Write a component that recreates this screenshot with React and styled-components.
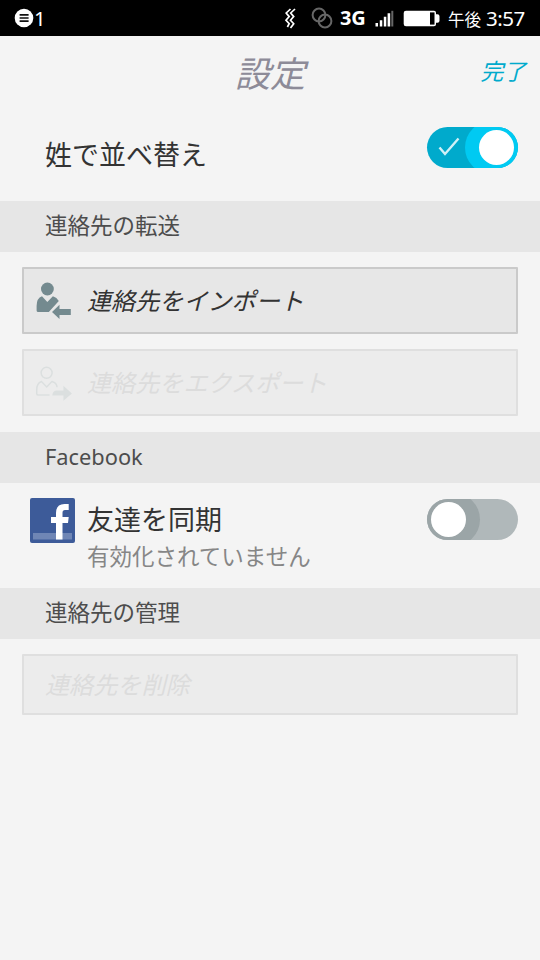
import React from "react";
import styled, { createGlobalStyle } from "styled-components";

const GlobalStyle = createGlobalStyle`
  * { box-sizing: border-box; }
  body {
    margin: 0;
    background: #f4f4f4;
    font-family: "Open Sans", "Noto Sans CJK JP", sans-serif;
  }
`;

const Screen = styled.main`
  width: 540px;
  height: 960px;
  display: flex;
  flex-direction: column;
  overflow: hidden;
  background: #f4f4f4;
`;

const StatusBar = styled.div`
  height: 36px;
  flex: none;
  display: flex;
  align-items: center;
  padding: 0 14px;
  background: #000;
  color: #fff;
  font-size: 20px;
  line-height: 36px;
  white-space: nowrap;
  svg { display: block; flex: none; }
`;

const Notifications = styled.span`
  width: 270px;
  display: flex;
  align-items: center;
  font-family: "Noto Sans", sans-serif;
  font-size: 20.5px;
  letter-spacing: -0.7px;
`;

const Spacer = styled.span`
  width: ${(p) => p.$width}px;
  flex: none;
`;

const Network = styled.span`
  width: 27px;
  margin: 0 8px 0 7px;
  font-family: "Noto Sans", sans-serif;
  font-size: 20px;
  font-weight: 700;
  letter-spacing: -0.2px;
`;

const Meridiem = styled.span`
  width: 33px;
  margin: 0 5px 0 7px;
  font-family: "Noto Sans CJK JP", sans-serif;
  font-size: 16.5px;
  padding-top: 1px;
`;

const Clock = styled.span`
  font-family: "Noto Sans", sans-serif;
  font-size: 20.5px;
  letter-spacing: -0.5px;
`;

const Header = styled.header`
  height: 75px;
  flex: none;
  display: grid;
  grid-template-columns: 1fr auto 1fr;
  padding-right: 14px;
`;

const Title = styled.h1`
  grid-column: 2;
  margin: 0 0 0 14px;
  font-size: 35.3px;
  font-weight: 400;
  font-style: italic;
  line-height: 74px;
  color: #8d8b98;
`;

const DoneButton = styled.button`
  justify-self: end;
  align-self: start;
  margin-top: 20px;
  border: 0;
  padding: 0;
  background: none;
  font: italic 400 22.8px/30px "Noto Sans CJK JP", sans-serif;
  color: #00aacc;
`;

const SettingRow = styled.div`
  height: ${(p) => p.$height}px;
  flex: none;
  display: flex;
  justify-content: space-between;
  align-items: flex-start;
  padding: ${(p) => p.$top}px 22px 0 ${(p) => p.$left}px;
`;

const SettingText = styled.div`
  flex: 1;
  padding-top: ${(p) => p.$top}px;
`;

const SettingName = styled.div`
  font-size: 27px;
  line-height: 40px;
  color: #333;
`;

const SettingStatus = styled.div`
  font-size: 22.5px;
  line-height: 34px;
  color: #868686;
`;

const SectionTitle = styled.h2`
  height: 51px;
  flex: none;
  margin: 0;
  padding-left: 45px;
  background: #e6e6e6;
  font-size: 22.5px;
  font-weight: 400;
  line-height: 50px;
  color: #4d4d4d;
`;

const LatinTitle = styled.span`
  font-family: "Noto Sans", sans-serif;
  font-size: 21.8px;
`;

const ActionGroup = styled.div`
  flex: none;
  display: flex;
  flex-direction: column;
  gap: 15px;
  padding: 15px 22px 16px;
`;

const ActionButton = styled.button`
  height: ${(p) => p.$height || 67}px;
  display: flex;
  align-items: center;
  padding: 0 0 2px ${(p) => (p.$icon ? 11 : 21)}px;
  border: 2px solid #cacaca;
  border-radius: 1px;
  background: #e7e7e7;
  font: italic 400 24.1px/36px "Noto Sans CJK JP", sans-serif;
  color: #333;
  text-align: left;
  svg { flex: none; margin-right: 14px; }
  &:disabled {
    border-color: #dfdfdf;
    background: #ececec;
    color: #dcdcdc;
  }
`;

const Track = styled.span`
  width: 91px;
  height: 41px;
  flex: none;
  display: flex;
  justify-content: ${(p) => (p.$on ? "flex-end" : "flex-start")};
  margin-top: ${(p) => (p.$on ? 0 : 1)}px;
  overflow: hidden;
  border-radius: 21px;
  background: ${(p) => (p.$on ? "#00aacc" : "#b0b8ba")};
`;

const TrackMark = styled.span`
  width: 38px;
  flex: none;
  padding: 10px 0 0 11px;
`;

const Halo = styled.span`
  width: 53px;
  height: 53px;
  flex: none;
  display: flex;
  align-items: center;
  justify-content: ${(p) => (p.$on ? "flex-end" : "flex-start")};
  margin-top: -6px;
  padding: 0 4px;
  border-radius: ${(p) => (p.$on ? "27px 0 0 27px" : "0 27px 27px 0")};
  background: ${(p) => (p.$on ? "#00caf2" : "#9ba5a7")};
`;

const Knob = styled.span`
  width: 35px;
  height: 35px;
  border-radius: 50%;
  background: #fff;
`;

function Toggle({ on }) {
  return (
    <Track $on={on} role="switch" aria-checked={on}>
      {on && (
        <TrackMark>
          <svg width="24" height="22" viewBox="0 0 24 22" fill="none" stroke="#d0f0f6" strokeWidth="2.4">
            <path d="M1.5 10.5 7 17 20.5 1.5" />
          </svg>
        </TrackMark>
      )}
      <Halo $on={on}>
        <Knob />
      </Halo>
    </Track>
  );
}

function NotificationIcon() {
  return (
    <svg width="20" height="20" viewBox="0 0 20 20">
      <circle cx="10" cy="10" r="9.3" fill="#fff" />
      <path d="M5.6 6.8h9M5.6 10h9M5.6 13.2h9" stroke="#111" strokeWidth="1.7" />
    </svg>
  );
}

function VibrateIcon() {
  return (
    <svg width="13" height="21" viewBox="0 0 13 21" fill="none" stroke="#fff" strokeWidth="1.7">
      <path d="M6.5 1 2.2 5l3 3.6-3.2 3.7 3.2 3.4L3.4 19" />
      <path d="M11 1 6.7 5l3 3.6-3.2 3.7 3.2 3.4L6.5 20" />
    </svg>
  );
}

function LinkIcon() {
  return (
    <svg width="22" height="22" viewBox="0 0 22 22" fill="none" stroke="#666" strokeWidth="2">
      <circle cx="8" cy="8" r="6.4" />
      <circle cx="14" cy="14" r="6.4" />
    </svg>
  );
}

function SignalIcon() {
  return (
    <svg width="19" height="17" viewBox="0 0 19 17" fill="#fff">
      <path d="M.5 13H3v3.5H.5zM4.8 10.2h2.5v6.3H4.8zM8.8 6.8h2.5v9.7H8.8zM12.6 3.2h2.6v13.3h-2.6z" />
      <path d="M16.3.8h2v15.7h-2z" fill="#666" />
    </svg>
  );
}

function BatteryIcon() {
  return (
    <svg width="38" height="17" viewBox="0 0 38 17">
      <path d="M3 .7h28q2 0 2 2v1.5h1.5q2 0 2 2v4.6q0 2-2 2H33v1.5q0 2-2 2H3q-2.3 0-2.3-2.3V3Q.7.7 3 .7z" fill="#fff" />
      <rect x="27" y="2.4" width="4.5" height="12.2" fill="#000" />
    </svg>
  );
}

function ImportIcon() {
  return (
    <svg width="38" height="38" viewBox="0 0 38 38" fill="#748a8f">
      <circle cx="12.4" cy="8" r="6.4" />
      <path d="M7 15.3 12.3 21l5.6-5.7q4 1.2 5.9 4.7L13.8 31H3.2Q1.6 31 1.6 29.5V25q0-7.8 5.4-9.7z" />
      <path d="M17 31 24.5 23.7v4.3h11.3v6H24.5v4z" />
    </svg>
  );
}

function ExportIcon() {
  return (
    <svg width="38" height="38" viewBox="0 0 38 38" fill="none" stroke="#dbdfdf" strokeWidth="1.5">
      <circle cx="11.6" cy="9.8" r="5.5" />
      <path d="M14.5 32H3Q1.7 32 1.7 30.5V27q0-6.8 4.8-8.5L11.7 24l5.2-5.5q4.8 1.3 5.2 5.8" />
      <path d="M17.3 32.5q.5-5 4.5-5h6.6v-4.7l8.5 7.7-8.5 7.3v-5.3z" fill="#dbdfdf" stroke="none" />
    </svg>
  );
}

const BrandTile = styled.svg`
  width: 45px;
  height: 45px;
  flex: none;
  margin-right: 12px;
`;

function FacebookIcon() {
  return (
    <BrandTile viewBox="0 0 45 45">
      <rect width="45" height="45" rx="2" fill="#3d5b99" />
      <path d="M3 35h39v6.5H3z" fill="#6f86b5" />
      <path d="M26 41.5V25h-5v-6h5v-4q0-9 8.5-9h4.2v6H35q-2.5 0-2.5 2.7V19h6.2l-.7 6h-5.5v16.5z" fill="#fff" />
    </BrandTile>
  );
}

export default function App() {
  return (
    <>
      <GlobalStyle />
      <Screen>
        <StatusBar>
          <Notifications><NotificationIcon />1</Notifications>
          <VibrateIcon />
          <Spacer $width={14} />
          <LinkIcon />
          <Network>3G</Network>
          <SignalIcon />
          <Spacer $width={9} />
          <BatteryIcon />
          <Meridiem>午後</Meridiem>
          <Clock>3:57</Clock>
        </StatusBar>
        <Header>
          <Title>設定</Title>
          <DoneButton>完了</DoneButton>
        </Header>
        <SettingRow $height={90} $top={16} $left={45}>
          <SettingText $top={8}>
            <SettingName>姓で並べ替え</SettingName>
          </SettingText>
          <Toggle on />
        </SettingRow>
        <SectionTitle>連絡先の転送</SectionTitle>
        <ActionGroup>
          <ActionButton $icon><ImportIcon />連絡先をインポート</ActionButton>
          <ActionButton $icon disabled><ExportIcon />連絡先をエクスポート</ActionButton>
        </ActionGroup>
        <SectionTitle><LatinTitle>Facebook</LatinTitle></SectionTitle>
        <SettingRow $height={105} $top={15} $left={30}>
          <FacebookIcon />
          <SettingText $top={2}>
            <SettingName>友達を同期</SettingName>
            <SettingStatus>有効化されていません</SettingStatus>
          </SettingText>
          <Toggle on={false} />
        </SettingRow>
        <SectionTitle>連絡先の管理</SectionTitle>
        <ActionGroup>
          <ActionButton $height={61} disabled>連絡先を削除</ActionButton>
        </ActionGroup>
      </Screen>
    </>
  );
}
